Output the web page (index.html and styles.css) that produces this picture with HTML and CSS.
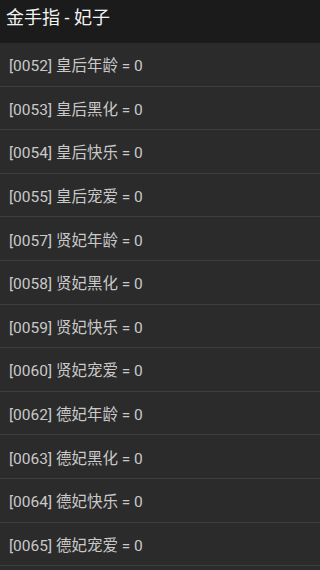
FILE: index.html
```
<!DOCTYPE html>
<html lang="zh">
<head>
<meta charset="utf-8">
<link rel="stylesheet" href="styles.css">
</head>
<body>
<header class="bar"><h1 class="title">金手指 - 妃子</h1></header>
<ul class="list">
<li class="row">[0052] 皇后年龄 = 0</li>
<li class="row">[0053] 皇后黑化 = 0</li>
<li class="row">[0054] 皇后快乐 = 0</li>
<li class="row">[0055] 皇后宠爱 = 0</li>
<li class="row">[0057] 贤妃年龄 = 0</li>
<li class="row">[0058] 贤妃黑化 = 0</li>
<li class="row">[0059] 贤妃快乐 = 0</li>
<li class="row">[0060] 贤妃宠爱 = 0</li>
<li class="row">[0062] 德妃年龄 = 0</li>
<li class="row">[0063] 德妃黑化 = 0</li>
<li class="row">[0064] 德妃快乐 = 0</li>
<li class="row">[0065] 德妃宠爱 = 0</li>
</ul>
</body>
</html>
```
FILE: styles.css
```
html, body {
  margin: 0;
  padding: 0;
  background: #2b2b2b;
  font-family: Roboto, "Noto Sans CJK SC", sans-serif;
}
.bar {
  height: 43px;
  background: #1b1b1b;
  display: flex;
  align-items: center;
  padding: 0 6px;
  box-sizing: border-box;
}
.title {
  margin: 0;
  font-size: 18px;
  font-weight: normal;
  color: #f2f2f2;
  line-height: 1;
  padding-bottom: 7px;
}
.list {
  list-style: none;
  margin: 0;
  padding: 0;
}
.row {
  height: 42.6px;
  border-bottom: 1px solid #3d3d3d;
  display: flex;
  align-items: center;
  padding-left: 9px;
  font-size: 15.5px;
  color: #c9c9c9;
  background: #2b2b2b;
}
```
